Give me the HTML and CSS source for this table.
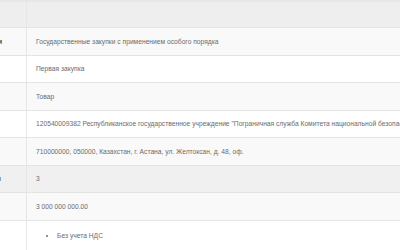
FILE: index.html
```html
<!DOCTYPE html>
<html lang="ru">
<head>
<meta charset="utf-8">
<title>Объявление</title>
<link rel="stylesheet" href="styles.css">
</head>
<body>
<div class="sheet">
  <div class="info">
    <div class="row row-head"><div class="lbl"></div><div class="val"></div></div>
    <div class="row row-odd"><div class="lbl">Способ проведения закупки</div><div class="val">Государственные закупки с применением особого порядка</div></div>
    <div class="row"><div class="lbl">Тип закупки</div><div class="val">Первая закупка</div></div>
    <div class="row row-odd"><div class="lbl">Вид предмета закупок</div><div class="val">Товар</div></div>
    <div class="row"><div class="lbl">Организатор</div><div class="val">120540009382 Республиканское государственное учреждение "Пограничная служба Комитета национальной безопасности Республики Казахстан"</div></div>
    <div class="row row-odd"><div class="lbl">Юр. адрес организатора</div><div class="val">710000000, 050000, Казахстан, г. Астана, ул. Желтоксан, д. 48, оф.</div></div>
    <div class="row row-hover"><div class="lbl">Кол-во лотов в объявлении</div><div class="val">3</div></div>
    <div class="row row-odd"><div class="lbl">Сумма закупки</div><div class="val">3 000 000 000.00</div></div>
    <div class="row row-list"><div class="lbl">Признаки</div><div class="val"><ul class="marks"><li>Без учета НДС</li></ul></div></div>
  </div>
</div>
</body>
</html>
```
FILE: styles.css
```css
html, body {
  margin: 0;
  padding: 0;
  background: #ffffff;
  overflow: hidden;
}

.sheet {
  width: 400px;
  height: 250px;
  overflow: hidden;
}

/* label column sits mostly left of the viewport; only its tail shows */
.info {
  margin-left: -100px;
  width: 900px;
  font-family: "Liberation Sans", Arial, sans-serif;
  font-size: 6.7px;
  color: #6b6b6b;
}

.row {
  display: grid;
  grid-template-columns: 127px 1fr;
  height: 27.5px;
  box-sizing: border-box;
  border-bottom: 1px solid #e4e4e4;
  background: #ffffff;
}

.row-head {
  height: 28px;
  background: #eeeeee;
  border-top: 2px solid #e6e6e6;
}

.row-odd { background: #f9f9f9; }
.row-hover { background: #f0f0f0; }

.lbl {
  padding-left: 8px;
  font-weight: bold;
  color: #4a4a4a;
  white-space: nowrap;
  overflow: hidden;
  display: flex;
  align-items: center;
  border-right: 1px solid #e6e6e6;
}

.val {
  padding-left: 9px;
  white-space: nowrap;
  overflow: hidden;
  display: flex;
  align-items: center;
}

.row-list { height: 40px; border-bottom: none; }
.row-list .val { align-items: flex-start; }

.marks {
  margin: 0;
  padding: 11px 0 0 21px;
  list-style: disc;
}
```
